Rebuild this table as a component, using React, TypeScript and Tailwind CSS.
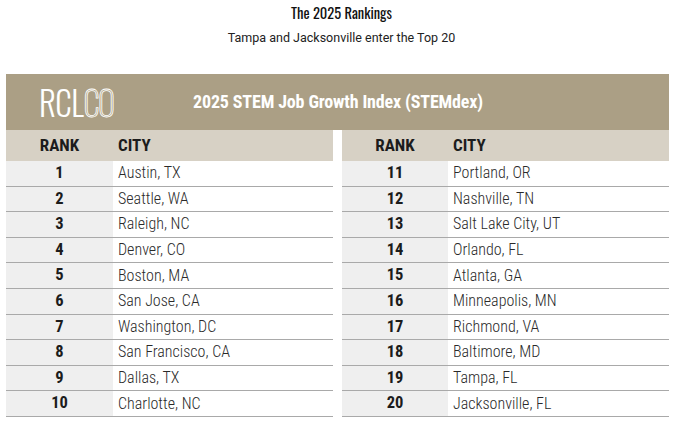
import React from "react";

const left: [string, string][] = [
  ["1", "Austin, TX"],
  ["2", "Seattle, WA"],
  ["3", "Raleigh, NC"],
  ["4", "Denver, CO"],
  ["5", "Boston, MA"],
  ["6", "San Jose, CA"],
  ["7", "Washington, DC"],
  ["8", "San Francisco, CA"],
  ["9", "Dallas, TX"],
  ["10", "Charlotte, NC"],
];

const right: [string, string][] = [
  ["11", "Portland, OR"],
  ["12", "Nashville, TN"],
  ["13", "Salt Lake City, UT"],
  ["14", "Orlando, FL"],
  ["15", "Atlanta, GA"],
  ["16", "Minneapolis, MN"],
  ["17", "Richmond, VA"],
  ["18", "Baltimore, MD"],
  ["19", "Tampa, FL"],
  ["20", "Jacksonville, FL"],
];

function Table({ rows, rankW }: { rows: [string, string][]; rankW: string }) {
  return (
    <div className="w-[327px] flex flex-col">
      <div className="flex h-[31px] items-center bg-[#d7d1c5] text-[#1c1c1c]">
        <div className={`${rankW} text-center text-[17px] font-bold leading-none`}>RANK</div>
        <div className="pl-[5px] text-[17px] font-bold leading-none">CITY</div>
      </div>
      {rows.map(([r, c]) => (
        <div key={r} className="flex h-[25.6px] border-b border-[#a9a9a9]">
          <div
            className={`${rankW} flex items-center justify-center bg-[#efefef] text-[16.5px] font-bold leading-none text-[#1c1c1c]`}
          >
            {r}
          </div>
          <div className="flex flex-1 items-center bg-white pl-[5px] text-[16px] font-light leading-none text-[#2a2a2a]">
            {c}
          </div>
        </div>
      ))}
    </div>
  );
}

export default function App() {
  return (
    <div className="w-[683px] h-[427px] bg-white font-['Roboto',sans-serif] [font-stretch:75%] overflow-hidden">
      <div className="flex flex-col items-center">
        <div className="mt-[3px] h-[20px] flex items-center font-['Oswald','Roboto',sans-serif] [font-stretch:100%] text-[14.5px] font-normal text-[#111]">
          The 2025 Rankings
        </div>
        <div className="mt-[5px] h-[20px] flex items-center font-['Roboto',sans-serif] [font-stretch:100%] text-[12.5px] text-[#222]">
          Tampa and Jacksonville enter the Top 20
        </div>
      </div>
      <div className="ml-[6px] mt-[26px] w-[663px]">
        <div className="flex h-[56px] items-center bg-[#ab9f85] pl-[33px]">
          <div className="w-[76px] flex items-center font-['Oswald','Roboto',sans-serif] [font-stretch:100%] text-[33px] font-light leading-none text-white">
            <span className="tracking-[-0.5px]">RCL</span>
            <span className="text-transparent [-webkit-text-stroke:0.8px_#ffffff] font-extralight tracking-[-1.5px]">CO</span>
          </div>
          <div className="ml-[78px] text-[18px] font-bold leading-none tracking-[-0.15px] text-white">
            2025 STEM Job Growth Index (STEMdex)
          </div>
        </div>
        <div className="flex justify-between">
          <Table rows={left} rankW="w-[107px]" />
          <Table rows={right} rankW="w-[106px]" />
        </div>
      </div>
    </div>
  );
}
